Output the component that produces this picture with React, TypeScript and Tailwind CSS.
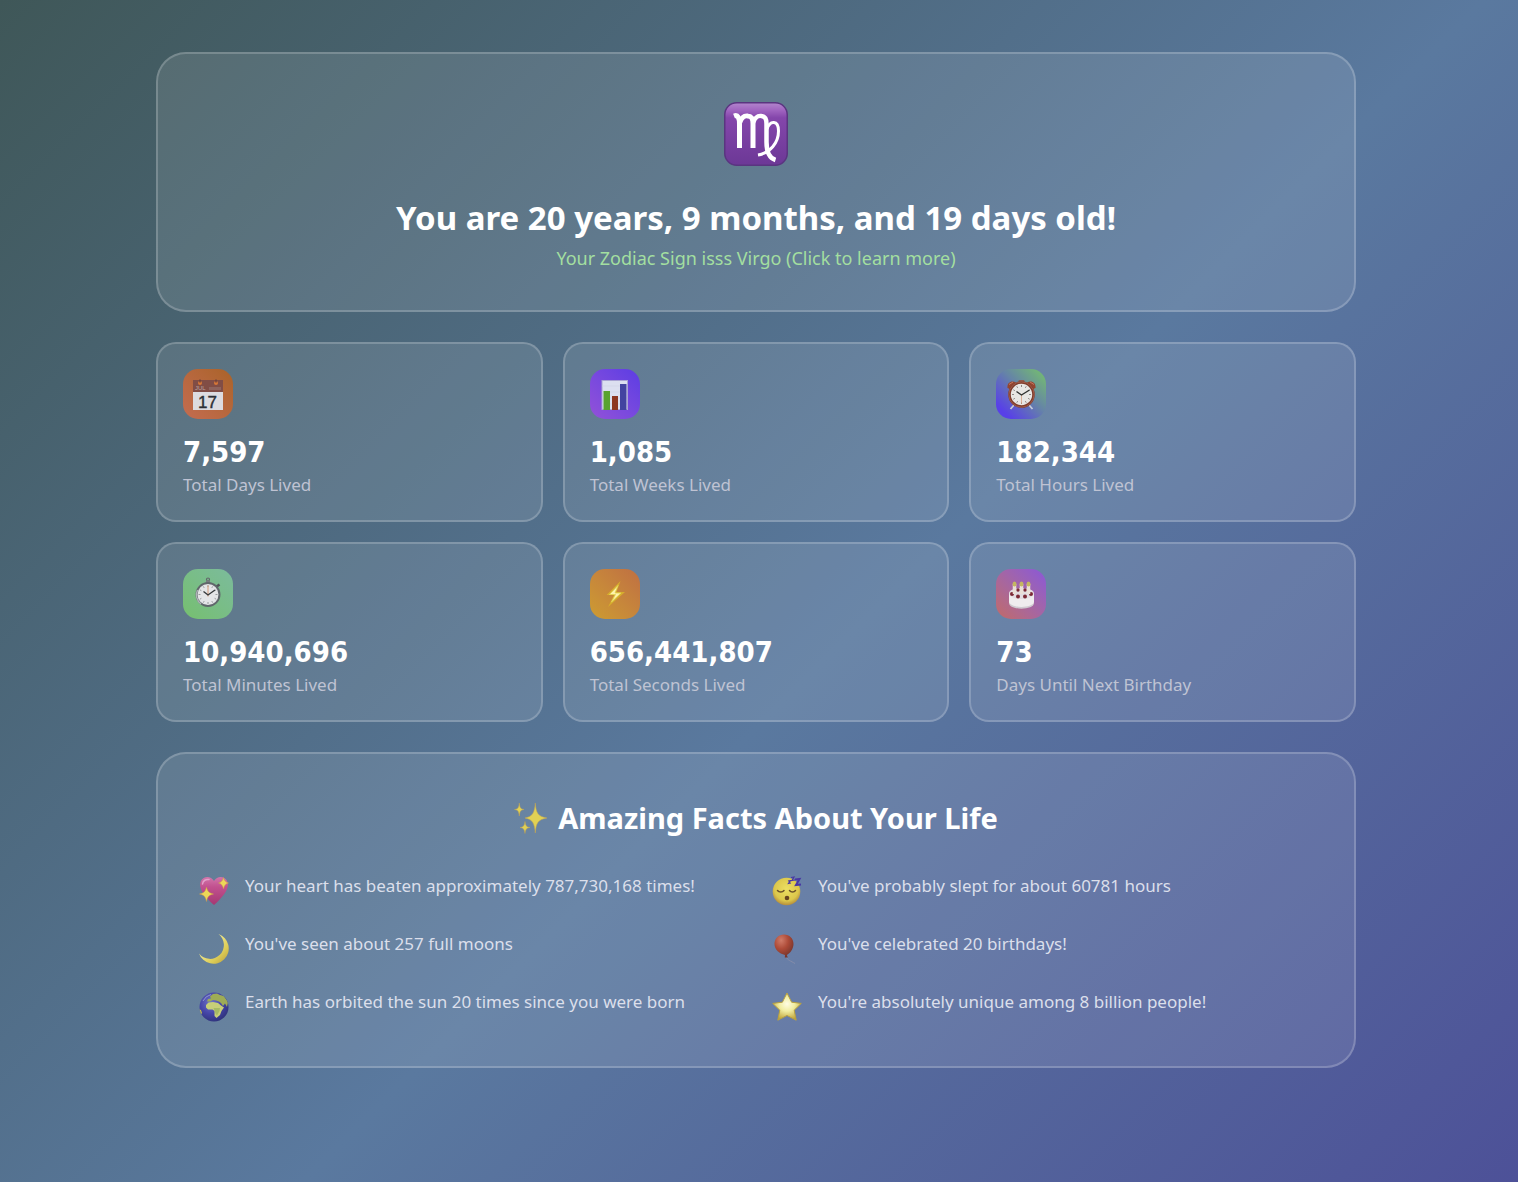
import type { ReactNode } from 'react';

const Virgo = () => (
  <svg viewBox="0 0 64 64" className="size-16" role="img" aria-label="Virgo">
    <defs>
      <linearGradient id="vg" x1="0" y1="0" x2="0" y2="1">
        <stop offset="0" stopColor="#b285cc" />
        <stop offset="0.12" stopColor="#a064c0" />
        <stop offset="0.24" stopColor="#8446ab" />
        <stop offset="1" stopColor="#6c3896" />
      </linearGradient>
    </defs>
    <rect x="0.75" y="0.75" width="62.5" height="62.5" rx="12" fill="url(#vg)" stroke="#5a3580" strokeWidth="1.5" />
    <g fill="none" stroke="#fff">
      <path d="M10 14C14 12.500 15.500 16 15.500 22V46" strokeWidth="5" />
      <path d="M15.500 21C18 14 21 13.500 24 14C28 14.500 29 17 29 22V46" strokeWidth="5" />
      <path d="M29 21C31.500 14 34.500 13.500 37.500 14C41.500 14.500 42.500 17 42.500 22V40C42.500 50 45 56 51.500 58" strokeWidth="4.500" />
      <path d="M43 27C46 18 54.500 18 54.500 29C54.500 41 46 51 34 53" strokeWidth="3" />
    </g>
  </svg>
);

const Calendar = () => (
  <svg viewBox="0 0 50 50" className="size-full" aria-hidden="true">
    <rect x="10" y="11" width="30" height="30" fill="#dcdce0" />
    <rect x="10" y="11" width="30" height="12" fill="#814d45" />
    <text x="12" y="20.500" fontSize="6" fill="#b9a3a1" className="font-['Liberation_Sans']">JUL</text>
    <rect x="26" y="18" width="12" height="3" fill="#8e635d" />
    <circle cx="17" cy="14" r="2" fill="#d77737" />
    <circle cx="33" cy="14" r="2" fill="#d77737" />
    <path d="M17 10.500V13.500M33 10.500V13.500" stroke="#6d4038" strokeWidth="1.500" />
    <text x="24.500" y="38.500" fontSize="17" textAnchor="middle" fill="#2d3035" stroke="#2d3035" strokeWidth="0.4" className="font-['Liberation_Sans']">17</text>
  </svg>
);

const Chart = () => (
  <svg viewBox="0 0 50 50" className="size-full" aria-hidden="true">
    <rect x="12" y="11.500" width="25.500" height="29" fill="#dcdff0" stroke="#aaa4d4" />
    <path d="M12 17H37M12 23H37M12 29H37M12 35H37" stroke="#d0d3e6" strokeWidth="0.6" />
    <rect x="13.500" y="22" width="6.500" height="19" fill="#59a32f" />
    <rect x="22" y="27" width="6" height="14" fill="#8d3520" />
    <rect x="30" y="15" width="6.500" height="26" fill="#4343a0" />
  </svg>
);

const TICKS = 'M0-9.500V-7.500M0 9.500V7.500M-9.500 0H-7.500M9.500 0H7.500M4.750-8.200L3.800-6.600M8.200-4.750L6.600-3.800M8.200 4.750L6.600 3.800M4.750 8.200L3.800 6.600M-4.750 8.200L-3.800 6.600M-8.200 4.750L-6.600 3.800M-8.200-4.750L-6.600-3.800M-4.750-8.200L-3.800-6.600';

const Alarm = () => (
  <svg viewBox="0 0 50 50" className="size-full" aria-hidden="true">
    <path d="M18 36L14.500 40M33 36L36.500 40" stroke="#c6ccd8" strokeWidth="1.800" />
    <path d="M11.500 19C11 14 15 11 20 13.500L14 20ZM39.500 19C40 14 36 11 31 13.500L37 20Z" fill="#94452f" />
    <path d="M13 15.500L17 13M38 15.500L34 13" stroke="#c37a63" strokeWidth="1" />
    <rect x="22.500" y="11" width="6" height="2.500" rx="1" fill="#8f5a4c" />
    <circle cx="25.500" cy="25.500" r="12" fill="#e8e6e4" stroke="#7f3c2c" strokeWidth="2.600" />
    <circle cx="25.500" cy="25.500" r="12.600" fill="none" stroke="#b6705c" strokeWidth="0.6" />
    <g transform="translate(25.500 25.500)">
      <path d={TICKS} stroke="#77716e" strokeWidth="0.8" />
      <path d="M0 0V9" stroke="#d8a184" strokeWidth="0.8" />
      <path d="M-5-3L0 0.500L8-4.500" stroke="#2f302f" strokeWidth="1.400" fill="none" />
    </g>
  </svg>
);

const Stopwatch = () => (
  <svg viewBox="0 0 50 50" className="size-full" aria-hidden="true">
    <circle cx="25" cy="10.500" r="1.500" fill="none" stroke="#62666a" strokeWidth="1.200" />
    <rect x="23" y="11.500" width="4" height="3" fill="#777c80" />
    <path d="M33 18L36.500 15.500" stroke="#4f5558" strokeWidth="2.500" />
    <circle cx="25" cy="25.500" r="11.500" fill="#e4e5e7" stroke="#60676b" strokeWidth="2" />
    <path d="M14.500 21A11.500 11.500 0 0 0 18 35" stroke="#aeb3b6" strokeWidth="1.500" fill="none" />
    <g transform="translate(25 25.500)">
      <path d={TICKS} stroke="#84888b" strokeWidth="0.8" />
      <path d="M0 2V-9" stroke="#d59a78" strokeWidth="1" />
      <path d="M-4.500-3L0 0.500L7-4.500" stroke="#36393b" strokeWidth="1.400" fill="none" />
    </g>
  </svg>
);

const Bolt = () => (
  <svg viewBox="0 0 50 50" className="size-full" aria-hidden="true">
    <path d="M30.500 12L16.500 26H24L18 38L35 23H26.500Z" fill="#d6ad2d" />
    <path d="M28 16.500L19.500 25.500H25.500L21.500 33L31 24H25Z" fill="#fff3ad" stroke="#e5d655" strokeWidth="0.8" />
  </svg>
);

const Cake = () => (
  <svg viewBox="0 0 50 50" className="size-full" aria-hidden="true">
    <path d="M13 25V34C13 41.500 38 41.500 38 34V25Z" fill="#cfcad0" />
    <path d="M13 25V33C15 39.500 36 39.500 38 33V25Z" fill="#efecee" />
    <ellipse cx="25.500" cy="24.500" rx="12.500" ry="5.500" fill="#e2dce2" />
    <g fill="#7c2936">
      <circle cx="22" cy="21" r="1.800" /><circle cx="29" cy="21" r="1.800" />
      <circle cx="16" cy="25" r="2" /><circle cx="35" cy="25" r="2" />
      <circle cx="22" cy="27.500" r="2" /><circle cx="29" cy="27.500" r="2" />
    </g>
    <path d="M18.500 15V25M25.500 15V25M32.500 15V25" stroke="#eae0d8" strokeWidth="3.500" />
    <g fill="#c4b661">
      <ellipse cx="18.500" cy="15" rx="2" ry="2.500" /><ellipse cx="25.500" cy="15" rx="2" ry="2.500" /><ellipse cx="32.500" cy="15" rx="2" ry="2.500" />
    </g>
  </svg>
);

const Sparkles = () => (
  <svg viewBox="0 0 34 32" className="h-8 w-[34px] shrink-0" aria-hidden="true">
    <g fill="#e1d154" stroke="#c3a552" strokeWidth="0.5">
      <path d="M21.300 1C22 11 24 14.500 33 16C24 17.500 22 21 21.300 31C20.500 21 18.500 17.500 11 16C18.500 14.500 20.500 11 21.300 1Z" />
      <path d="M5.300 1C5.700 5.500 6.500 7 10 7.500C6.500 8 5.700 9.500 5.300 14C4.900 9.500 4 8 0.500 7.500C4 7 4.900 5.500 5.300 1Z" />
      <path d="M11 19.500C11.400 23.500 12.400 25 16 25.500C12.400 26 11.400 27.500 11 31.500C10.600 27.500 9.500 26 6 25.500C9.500 25 10.600 23.500 11 19.500Z" />
    </g>
  </svg>
);

const Heart = () => (
  <svg viewBox="0 0 32 32" className="size-8 shrink-0" aria-hidden="true">
    <defs>
      <linearGradient id="hg" x1="0" y1="0" x2="0" y2="1">
        <stop offset="0" stopColor="#d175ab" /><stop offset="0.35" stopColor="#c2518f" /><stop offset="1" stopColor="#a43872" />
      </linearGradient>
    </defs>
    <path d="M16 6C13 1 6.500 1 3.500 5C-1 12 6 21 16 30C26 21 33 12 28.500 5C25.500 1 19 1 16 6Z" fill="url(#hg)" />
    <path d="M4.500 9C5 5.500 8 4 11 4.500" stroke="#e3a0c9" strokeWidth="1.500" strokeLinecap="round" fill="none" />
    <g fill="#ecd758" stroke="#c9944f" strokeWidth="0.5">
      <path d="M8.500 12C9.600 16.500 11 18 15.500 19C11 20 9.600 21.500 8.500 26.500C7.400 21.500 6 20 1.500 19C6 18 7.400 16.500 8.500 12Z" />
      <path d="M25.500 2.500C26.300 5.500 27.500 7 30.500 8C27.500 9 26.300 10.500 25.500 14C24.700 10.500 23.500 9 20.500 8C23.500 7 24.700 5.500 25.500 2.500Z" />
    </g>
  </svg>
);

const Moon = () => (
  <svg viewBox="0 0 32 32" className="size-8 shrink-0" aria-hidden="true">
    <defs>
      <linearGradient id="mg" x1="0" y1="0" x2="1" y2="1">
        <stop offset="0.4" stopColor="#ede483" /><stop offset="0.7" stopColor="#dccb55" /><stop offset="1" stopColor="#b69a3e" />
      </linearGradient>
    </defs>
    <path d="M20.500 1A15.300 15.300 0 1 1 1 20.500A13.900 13.900 0 1 0 20.500 1Z" fill="url(#mg)" />
  </svg>
);

const Earth = () => (
  <svg viewBox="0 0 32 32" className="size-8 shrink-0" aria-hidden="true">
    <defs>
      <radialGradient id="eg" cx="0.4" cy="0.35" r="0.7">
        <stop offset="0" stopColor="#7175c8" /><stop offset="0.55" stopColor="#4545a7" /><stop offset="1" stopColor="#2e3279" />
      </radialGradient>
      <clipPath id="ec"><circle cx="16" cy="16" r="14.500" /></clipPath>
    </defs>
    <circle cx="16" cy="16" r="14.500" fill="url(#eg)" />
    <g clipPath="url(#ec)">
      <path d="M9 10.500L10 8L13 7.500L12 5.500L15 3L19 2.500L22 4L26 5L30 11L29 16L27 12.500L25 15L23 12L21 10.500L18 9.500L15 9L12 10.500Z" fill="#9eac56" />
      <path d="M8 14L10.500 11.500L15 11L20 12L23 14.500L26 16.500L23.500 20L22 24L18.500 27L16.500 25L16.500 20L14.500 18.500L10 18.500L8 16.500Z" fill="#c8cf78" />
      <path d="M15.500 17L22 17L21.500 20L19 24.500L17.500 22.500Z" fill="#a6ba65" />
      <path d="M0 18L3 19L4 22L2 25L0 23Z" fill="#c2bc4f" />
    </g>
    <path d="M5 10A12.500 12.500 0 0 1 13 3.500" stroke="#aab5dc" strokeWidth="1" fill="none" opacity="0.7" />
  </svg>
);

const Sleeping = () => (
  <svg viewBox="0 0 32 32" className="size-8 shrink-0" aria-hidden="true">
    <defs>
      <radialGradient id="sg" cx="0.5" cy="0.4" r="0.62">
        <stop offset="0" stopColor="#ecdf62" /><stop offset="0.7" stopColor="#dcc74b" /><stop offset="1" stopColor="#b0853a" />
      </radialGradient>
    </defs>
    <circle cx="15.500" cy="16.500" r="13.800" fill="url(#sg)" />
    <path d="M6.500 15.500C8 17.500 11.500 17.500 13 15.500M18.500 15.500C20 17.500 23 17.500 24.500 15.500" stroke="#6d5227" strokeWidth="1.500" fill="none" strokeLinecap="round" />
    <ellipse cx="16" cy="23" rx="2.300" ry="2.300" fill="#67441f" />
    <path d="M24 4.500L28.500 4L25 10L30 9.500" stroke="#4937a4" strokeWidth="2" fill="none" />
    <path d="M20 2.500L23 2L21 5.500L24 5M17 6L19.500 5.500L17.500 8.500L20 8" stroke="#4937a4" strokeWidth="1.200" fill="none" />
  </svg>
);

const Balloon = () => (
  <svg viewBox="0 0 32 32" className="size-8 shrink-0" aria-hidden="true">
    <defs>
      <radialGradient id="bg" cx="0.35" cy="0.25" r="0.75">
        <stop offset="0" stopColor="#d07b68" /><stop offset="0.5" stopColor="#ae4b38" /><stop offset="1" stopColor="#77352c" />
      </radialGradient>
    </defs>
    <path d="M15.500 24C16 27 20 28 24 30.500" stroke="#8b8fa9" strokeWidth="0.8" fill="none" />
    <path d="M13 1.500C18.500 1.500 22.500 5.500 22.500 11C22.500 16 19 20.500 15.800 22L16.800 24.500H13.800L14 22C8 20.500 3.500 16.500 3.500 11C3.500 5.500 7.500 1.500 13 1.500Z" fill="url(#bg)" />
  </svg>
);

const Star = () => (
  <svg viewBox="0 0 32 32" className="size-8 shrink-0" aria-hidden="true">
    <defs>
      <radialGradient id="stg" cx="0.5" cy="0.4" r="0.6">
        <stop offset="0" stopColor="#fffde4" /><stop offset="0.45" stopColor="#f1eda0" /><stop offset="1" stopColor="#bfa438" />
      </radialGradient>
    </defs>
    <path d="M16 2L20.600 11.200L30.300 12.400L23.200 19.200L25.200 29.200L16 24.500L6.800 29.200L8.800 19.200L1.700 12.400L11.400 11.200Z" fill="url(#stg)" stroke="#b9a140" strokeWidth="1" strokeLinejoin="round" />
  </svg>
);

type Stat = { value: string; label: string; icon: ReactNode; tile: string };

const stats: Stat[] = [
  { value: '7,597', label: 'Total Days Lived', icon: <Calendar />, tile: 'bg-linear-45 from-[#c46c50] to-[#aa6328]' },
  { value: '1,085', label: 'Total Weeks Lived', icon: <Chart />, tile: 'bg-linear-45 from-[#9351d8] to-[#5c3ce4]' },
  { value: '182,344', label: 'Total Hours Lived', icon: <Alarm />, tile: 'bg-[linear-gradient(45deg,#5840e8_15%,#6583a8_55%,#72b478_90%)]' },
  { value: '10,940,696', label: 'Total Minutes Lived', icon: <Stopwatch />, tile: 'bg-linear-45 from-[#76bf6e] to-[#7cbb9c]' },
  { value: '656,441,807', label: 'Total Seconds Lived', icon: <Bolt />, tile: 'bg-linear-45 from-[#cd9c30] to-[#bf6f42]' },
  { value: '73', label: 'Days Until Next Birthday', icon: <Cake />, tile: 'bg-linear-45 from-[#c26a66] to-[#8b56d8]' },
];

const facts: { text: string; icon: ReactNode }[] = [
  { text: 'Your heart has beaten approximately 787,730,168 times!', icon: <Heart /> },
  { text: "You've probably slept for about 60781 hours", icon: <Sleeping /> },
  { text: "You've seen about 257 full moons", icon: <Moon /> },
  { text: "You've celebrated 20 birthdays!", icon: <Balloon /> },
  { text: 'Earth has orbited the sun 20 times since you were born', icon: <Earth /> },
  { text: "You're absolutely unique among 8 billion people!", icon: <Star /> },
];

export default function App() {
  return (
    <main className="min-h-screen bg-[linear-gradient(135deg,#3f5758_0%,#5a799f_55%,#4d5198_100%)] py-[52px] pr-[26px] pl-5 font-['Noto_Sans',sans-serif] text-white">
      <div className="mx-auto flex max-w-[1200px] flex-col gap-[30px]">
        <section className="flex flex-col items-center rounded-[30px] border-2 border-white/20 bg-white/10 p-10 text-center">
          <div className="mt-2"><Virgo /></div>
          <h1 className="mt-8 text-[33px] leading-10 font-bold">You are 20 years, 9 months, and 19 days old!</h1>
          <a href="#virgo" className="mt-2 text-[18px] leading-6 text-[#a3dfa0]">
            Your Zodiac Sign isss Virgo (Click to learn more)
          </a>
        </section>

        <section className="grid grid-cols-1 gap-5 sm:grid-cols-2 lg:grid-cols-3">
          {stats.map((s) => (
            <article key={s.label} className="rounded-[20px] border-2 border-white/20 bg-white/10 p-[25px]">
              <div className={`size-[50px] rounded-[15px] ${s.tile}`}>{s.icon}</div>
              <div className="mt-[15px] font-['DejaVu_Sans_Condensed',sans-serif] text-[29px] leading-9 font-bold">{s.value}</div>
              <div className="mt-[5px] text-[17px] leading-5 text-[#bfc3d3]">{s.label}</div>
            </article>
          ))}
        </section>

        <section className="rounded-[30px] border-2 border-white/20 bg-white/10 p-10">
          <h2 className="mt-1.5 flex items-center justify-center gap-2.5 text-[29px] leading-9 font-bold">
            <Sparkles />
            Amazing Facts About Your Life
          </h2>
          <ul className="mt-9 grid grid-cols-1 gap-x-[30px] gap-y-5 md:grid-cols-2">
            {facts.map((f) => (
              <li key={f.text} className="flex min-h-[38px] items-start gap-[15px]">
                <span className="mt-[3px] shrink-0">{f.icon}</span>
                <span className="text-[17px] leading-7 text-[#dbdfeb]">{f.text}</span>
              </li>
            ))}
          </ul>
        </section>
      </div>
    </main>
  );
}
